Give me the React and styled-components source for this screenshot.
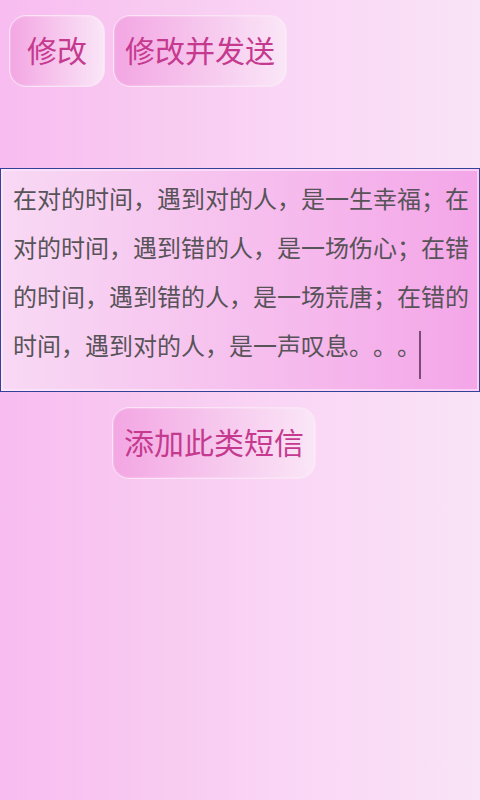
import styled, { createGlobalStyle } from "styled-components"

const GlobalStyle = createGlobalStyle`
    html, body {
        margin: 0;
        padding: 0;
        height: 100%;
    }
    body {
        font-family: "Noto Sans CJK SC", "Noto Sans", sans-serif;
    }
    #root {
        min-height: 100%;
    }
`

const Page = styled.div`
    width: 480px;
    height: 800px;
    overflow: hidden;
    background: linear-gradient(to right, #f8bcf0 0%, #f8cbf1 35%, #fad6f6 60%, #f9e3f6 100%);
    padding-top: 15px;
    box-sizing: border-box;
`

const Toolbar = styled.div`
    display: flex;
    gap: 8px;
    padding-left: 9px;
`

const PinkButton = styled.button`
    min-width: 96px;
    height: 72px;
    padding: 0 11px 5px;
    box-sizing: border-box;
    border: 1px solid #fae4f6;
    border-radius: 17px;
    background: linear-gradient(to right, #f3a6e3 0%, #f6c3ec 45%, #fae6f7 100%);
    box-shadow: inset 0 0 2px rgba(255, 255, 255, 0.7);
    color: #c53a8e;
    font-family: "Noto Sans CJK SC", sans-serif;
    font-size: 30px;
    line-height: 1;
    cursor: pointer;
    margin-left: ${(p) => p.$offset || 0}px;
`

const MessageBox = styled.div`
    margin-top: 81px;
    height: 224px;
    box-sizing: border-box;
    border: 1px solid #34409a;
    box-shadow: inset 0 0 0 2px rgba(255, 235, 252, 0.6);
    background: linear-gradient(to right, #f8d9f4 0%, #f6c0ee 50%, #f4a6e8 100%);
    padding: 4px 10px 0 12px;
    color: #585358;
    font-size: 24px;
    line-height: 49px;
    text-spacing-trim: space-all;
`

const Cursor = styled.span`
    display: inline-block;
    width: 2px;
    height: 48px;
    background: #7a4a7c;
    vertical-align: middle;
    position: relative;
    top: 7px;
    margin-left: -2px;
`

const Footer = styled.div`
    margin-top: 15px;
`

const text = "在对的时间，遇到对的人，是一生幸福；在对的时间，遇到错的人，是一场伤心；在错的时间，遇到错的人，是一场荒唐；在错的时间，遇到对的人，是一声叹息。。。"

function App() {
    return (
        <Page>
            <GlobalStyle />
            <Toolbar>
                <PinkButton>修改</PinkButton>
                <PinkButton>修改并发送</PinkButton>
            </Toolbar>
            <MessageBox>
                {text}
                <Cursor />
            </MessageBox>
            <Footer>
                <PinkButton $offset={112}>添加此类短信</PinkButton>
            </Footer>
        </Page>
    )
}

export default App
